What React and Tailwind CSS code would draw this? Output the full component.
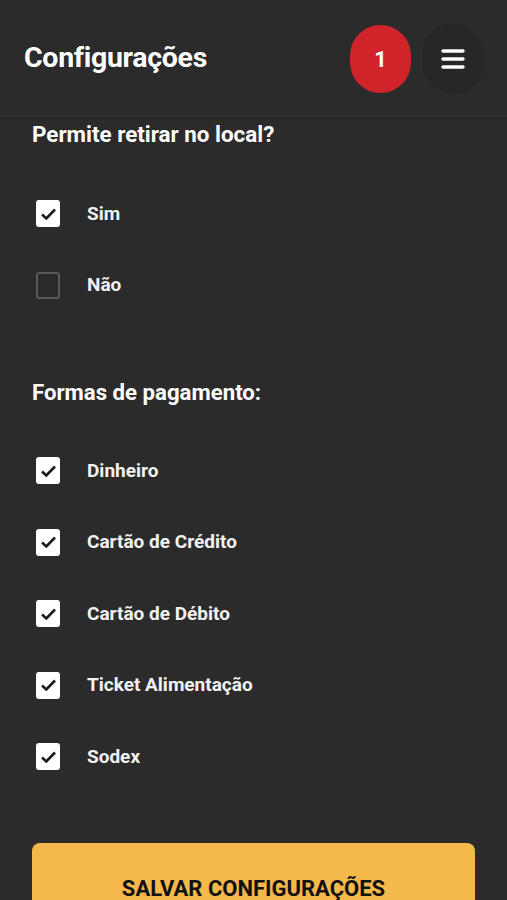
const pickup = [
  { label: "Sim", checked: true },
  { label: "Não", checked: false },
];

const payments = [
  "Dinheiro",
  "Cartão de Crédito",
  "Cartão de Débito",
  "Ticket Alimentação",
  "Sodex",
];

const CheckRow = ({ label, checked }) => (
  <div className="flex items-center h-[71.5px] pl-[36px]">
    {checked ? (
      <span className="w-[24px] h-[27px] rounded-[3px] bg-white flex items-center justify-center">
        <svg width="17" height="14" viewBox="0 0 17 14" fill="none">
          <path d="M2 7.5 L6.3 11.5 L15 2.5" stroke="#1a1a1a" strokeWidth="2.6" />
        </svg>
      </span>
    ) : (
      <span className="w-[24px] h-[27px] rounded-[3px] border-2 border-[#595959]"></span>
    )}
    <span className="ml-[27px] text-[19px] font-bold text-[#f2f2f2]">{label}</span>
  </div>
);

export default function App() {
  return (
    <div
      className="w-[507px] h-[900px] overflow-hidden bg-[#2b2b2b] text-white"
      style={{ fontFamily: "Roboto, 'Liberation Sans', sans-serif" }}
    >
      {/* Header */}
      <header className="h-[119px] flex items-center border-b border-[#242424] pl-[24px] pr-[23px]">
        <h1 className="text-[28.5px] font-bold tracking-[-0.3px] flex-1 pb-[2px]">Configurações</h1>
        <div className="w-[61px] h-[68px] rounded-full bg-[#d0242b] flex items-center justify-center text-[22px] font-bold">
          1
        </div>
        <button className="ml-[11px] w-[62px] h-[70px] rounded-full bg-[#262626] flex items-center justify-center">
          <svg width="24" height="22" viewBox="0 0 24 22" fill="none">
            <path d="M2 3h20M2 11h20M2 19h20" stroke="#fff" strokeWidth="3.4" strokeLinecap="round" />
          </svg>
        </button>
      </header>

      <section className="pt-[1px]">
        <h2 className="pl-[32px] text-[22.4px] font-bold h-[30px] flex items-center">
          Permite retirar no local?
        </h2>
        <div className="mt-[28px]">
          {pickup.map((p) => (
            <CheckRow key={p.label} {...p} />
          ))}
        </div>

        <h2 className="pl-[32px] mt-[57px] text-[22.2px] font-bold h-[30px] flex items-center">
          Formas de pagamento:
        </h2>
        <div className="mt-[27px]">
          {payments.map((p) => (
            <CheckRow key={p} label={p} checked />
          ))}
        </div>

        <div className="px-[32px] mt-[50px]">
          <button className="w-full h-[90px] rounded-[8px] bg-[#f5b84b] text-[#111] text-[22px] font-bold pt-[2px]">
            SALVAR CONFIGURAÇÕES
          </button>
        </div>
      </section>
    </div>
  );
}
